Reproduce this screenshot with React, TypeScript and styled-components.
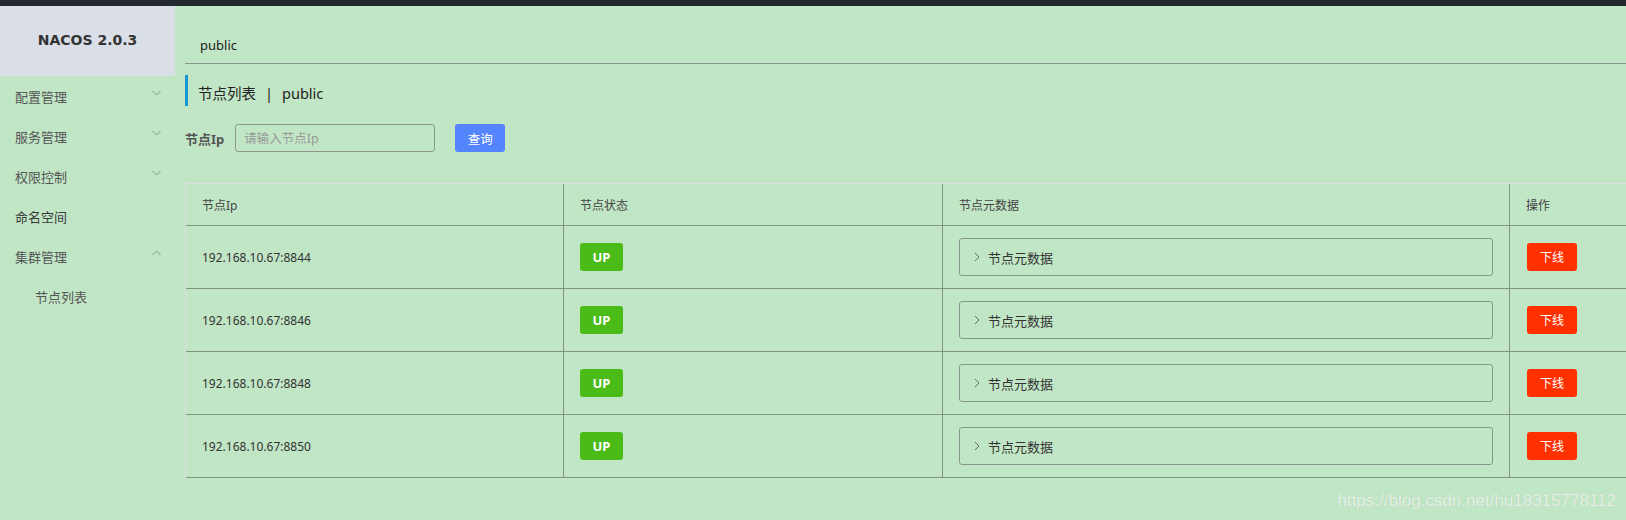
import React from 'react'
import styled, { createGlobalStyle } from 'styled-components'

const GlobalStyle = createGlobalStyle`
  html, body {
    margin: 0;
    padding: 0;
    background: #c1e6c6;
    font-family: "Noto Sans", "Noto Sans CJK SC", sans-serif;
  }
  * { box-sizing: border-box; }
`

const Page = styled.div`
  position: relative;
  width: 1626px;
  height: 520px;
  overflow: hidden;
  background: #c1e6c6;
`

const TopBar = styled.div`
  height: 6px;
  background: #23272e;
`

const Layout = styled.div`
  display: flex;
  height: 514px;
`

const Sidebar = styled.aside`
  width: 175px;
  flex-shrink: 0;
  display: flex;
  flex-direction: column;
`

const Brand = styled.div`
  height: 70px;
  background: #dadee6;
  display: flex;
  align-items: center;
  justify-content: center;
  font-family: "DejaVu Sans", sans-serif;
  font-weight: bold;
  font-size: 14px;
  color: #333;
  padding-bottom: 2px;
`

const Menu = styled.ul`
  list-style: none;
  margin: 0;
  padding: 0;
`

const MenuItem = styled.li<{ $sub?: boolean; $dark?: boolean }>`
  height: 40px;
  display: flex;
  align-items: center;
  justify-content: space-between;
  padding: 0 14px 0 ${p => (p.$sub ? '35px' : '15px')};
  font-size: 13px;
  color: ${p => (p.$dark ? '#3a3a3a' : '#555')};

  svg {
    margin-top: -6px;
  }
`

const Main = styled.main`
  flex: 1;
  min-width: 0;
  padding-left: 10px;
  overflow: hidden;
`

const NamespaceBar = styled.div`
  height: 58px;
  display: flex;
  align-items: center;
  padding: 20px 0 0 15px;
  font-size: 13px;
  color: #222;
  border-bottom: 1px solid #85978a;
`

const Title = styled.h2`
  margin: 11px 0 0;
  height: 31px;
  line-height: 36px;
  border-left: 3px solid #1a96d4;
  padding-left: 10px;
  font-size: 14.5px;
  font-weight: normal;
  color: #222;

  span {
    margin: 0 9px;
  }
`

const SearchRow = styled.div`
  margin-top: 18px;
  display: flex;
  align-items: center;
  height: 28px;
`

const SearchLabel = styled.label`
  font-size: 13px;
  font-weight: bold;
  color: #555;
  margin-right: 11px;
`

const SearchInput = styled.input`
  width: 200px;
  height: 28px;
  border: 1px solid #8a998c;
  border-radius: 3px;
  background: transparent;
  padding: 0 8px;
  font-family: inherit;
  font-size: 12.5px;
  color: #333;
  outline: none;

  &::placeholder {
    color: #999;
  }
`

const SearchButton = styled.button`
  margin-left: 20px;
  width: 50px;
  height: 28px;
  border: none;
  border-radius: 3px;
  background: #5584ff;
  color: #fff;
  font-family: inherit;
  font-size: 12.5px;
`

const Table = styled.div`
  margin-top: 31px;
  width: 1500px;
  border-top: 1px solid #dcdee3;
  border-left: 1px solid #dcdee3;
`

const Row = styled.div<{ $head?: boolean }>`
  display: grid;
  grid-template-columns: 378px 379px 567px 176px;
  height: ${p => (p.$head ? '42px' : '63px')};
  border-bottom: 1px solid #7f9482;
`

const Cell = styled.div<{ $head?: boolean }>`
  display: flex;
  align-items: center;
  padding: 0 16px;
  border-right: 1px solid #7f9482;
  font-size: 12px;
  color: ${p => (p.$head ? '#444' : '#333')};
`

const StatusTag = styled.span`
  width: 43px;
  height: 28px;
  border-radius: 3px;
  background: #4bbb18;
  color: #fff;
  font-size: 13px;
  font-weight: bold;
  display: flex;
  align-items: center;
  justify-content: center;
`

const MetaBox = styled.div`
  flex: 1;
  height: 38px;
  border: 1px solid #85978a;
  border-radius: 3px;
  display: flex;
  align-items: center;
  padding-left: 14px;
  gap: 8px;
  font-size: 13px;
  color: #333;
`

const OfflineButton = styled.button`
  width: 50px;
  height: 28px;
  margin-left: 1px;
  border: none;
  border-radius: 3px;
  background: #ff3000;
  color: #fff;
  font-family: inherit;
  font-size: 12px;
`

const Watermark = styled.div`
  position: absolute;
  right: 10px;
  bottom: 9px;
  font-family: "Liberation Sans", Arial, sans-serif;
  font-size: 17px;
  color: rgba(255, 255, 255, 0.7);
  text-shadow: 0 0 1px rgba(120, 140, 120, 0.3);
`

const Chevron = ({ up }: { up?: boolean }) => (
  <svg width="9" height="6" viewBox="0 0 9 6">
    <path
      d={up ? 'M0.5 5 L4.5 1 L8.5 5' : 'M0.5 1 L4.5 5 L8.5 1'}
      fill="none"
      stroke="#7d8f86"
      strokeWidth="1"
    />
  </svg>
)

const SmallArrow = () => (
  <svg width="6" height="10" viewBox="0 0 6 10">
    <path d="M1 1 L5 5 L1 9" fill="none" stroke="#666" strokeWidth="1" />
  </svg>
)

const nodes = [
  '192.168.10.67:8844',
  '192.168.10.67:8846',
  '192.168.10.67:8848',
  '192.168.10.67:8850',
]

const App: React.FC = () => {
  return (
    <Page>
      <GlobalStyle />
      <TopBar />
      <Layout>
        <Sidebar>
          <Brand>NACOS 2.0.3</Brand>
          <Menu>
            <MenuItem>配置管理<Chevron /></MenuItem>
            <MenuItem>服务管理<Chevron /></MenuItem>
            <MenuItem>权限控制<Chevron /></MenuItem>
            <MenuItem $dark>命名空间</MenuItem>
            <MenuItem>集群管理<Chevron up /></MenuItem>
            <MenuItem $sub>节点列表</MenuItem>
          </Menu>
        </Sidebar>
        <Main>
          <NamespaceBar>public</NamespaceBar>
          <Title>节点列表<span>|</span>public</Title>
          <SearchRow>
            <SearchLabel>节点Ip</SearchLabel>
            <SearchInput placeholder='请输入节点Ip' />
            <SearchButton>查询</SearchButton>
          </SearchRow>
          <Table>
            <Row $head>
              <Cell $head>节点Ip</Cell>
              <Cell $head>节点状态</Cell>
              <Cell $head>节点元数据</Cell>
              <Cell $head>操作</Cell>
            </Row>
            {nodes.map(ip => (
              <Row key={ip}>
                <Cell>{ip}</Cell>
                <Cell><StatusTag>UP</StatusTag></Cell>
                <Cell>
                  <MetaBox><SmallArrow />节点元数据</MetaBox>
                </Cell>
                <Cell><OfflineButton>下线</OfflineButton></Cell>
              </Row>
            ))}
          </Table>
        </Main>
      </Layout>
      <Watermark>https://blog.csdn.net/hu18315778112</Watermark>
    </Page>
  )
}

export default App
